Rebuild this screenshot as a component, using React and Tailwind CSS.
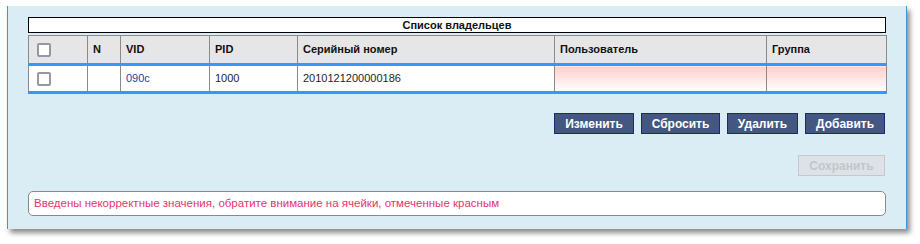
export default function App() {
  const font = { fontFamily: '"Liberation Sans", Arial, sans-serif' };
  const th = "border border-[#8a8a8a] text-left font-bold text-[11px] text-[#111] px-[5px] h-[29px] align-middle";
  const td = "border-x border-[#8a8a8a] text-left text-[11px] px-[5px] h-[28px] align-middle";
  const Box = () => (
    <span className="inline-block w-[14px] h-[14px] rounded-[2px] border-2 border-[#9896a6] bg-white align-middle" />
  );
  const btn = "h-[21px] bg-[#44587f] border border-[#1e2a70] text-white font-bold text-[12px] leading-none";
  return (
    <div className="w-[920px] h-[244px] bg-white pt-[6px] pl-[7px]" style={font}>
      <div className="w-[900px] h-[223px] bg-[#daedf5] border-x border-[#3a9ad8] shadow-[3px_4px_5px_rgba(0,0,0,0.45)] pt-[11px] px-[20px]">
        <div className="h-[16px] border border-black bg-white text-center text-[11px] font-bold leading-[14px] text-[#111]">
          Список владельцев
        </div>
        <table className="mt-[2px] w-[858px] table-fixed border-collapse">
          <colgroup>
            <col className="w-[59px]" />
            <col className="w-[33px]" />
            <col className="w-[89px]" />
            <col className="w-[88px]" />
            <col className="w-[257px]" />
            <col className="w-[212px]" />
            <col className="w-[120px]" />
          </colgroup>
          <thead>
            <tr className="bg-[#e6e6e6] border-b-[3px] border-b-[#3399ff]">
              <th className={th + " pl-[8px]"}><Box /></th>
              <th className={th}>N</th>
              <th className={th}>VID</th>
              <th className={th}>PID</th>
              <th className={th}>Серийный номер</th>
              <th className={th}>Пользователь</th>
              <th className={th}>Группа</th>
            </tr>
          </thead>
          <tbody>
            <tr className="bg-white border-b-[3px] border-b-[#3399ff]">
              <td className={td + " pl-[8px]"}><Box /></td>
              <td className={td}></td>
              <td className={td + " text-[#1f3fa0]"}>090c</td>
              <td className={td + " text-[#1e1e2a]"}>1000</td>
              <td className={td + " text-[#1e1e2a]"}>2010121200000186</td>
              <td className={td + " bg-gradient-to-b from-[#ffcfcf] to-white"}></td>
              <td className={td + " bg-gradient-to-b from-[#ffcfcf] to-white"}></td>
            </tr>
          </tbody>
        </table>
        <div className="mt-[19px] flex justify-end gap-[7px] pr-[1px]">
          <button className={btn + " w-[80px]"}>Изменить</button>
          <button className={btn + " w-[79px]"}>Сбросить</button>
          <button className={btn + " w-[71px]"}>Удалить</button>
          <button className={btn + " w-[80px]"}>Добавить</button>
        </div>
        <div className="mt-[21px] flex justify-end pr-[1px]">
          <button className="h-[21px] w-[87px] bg-[#dde2e8] border border-[#c6c8ca] text-[#c2c6cb] font-bold text-[12px] leading-none">
            Сохранить
          </button>
        </div>
        <div className="mt-[15px] h-[25px] rounded-[5px] border border-[#8a8a8a] bg-white px-[5px] flex items-center text-[11.5px] text-[#e8336e]">
          Введены некорректные значения, обратите внимание на ячейки, отмеченные красным
        </div>
      </div>
    </div>
  );
}
